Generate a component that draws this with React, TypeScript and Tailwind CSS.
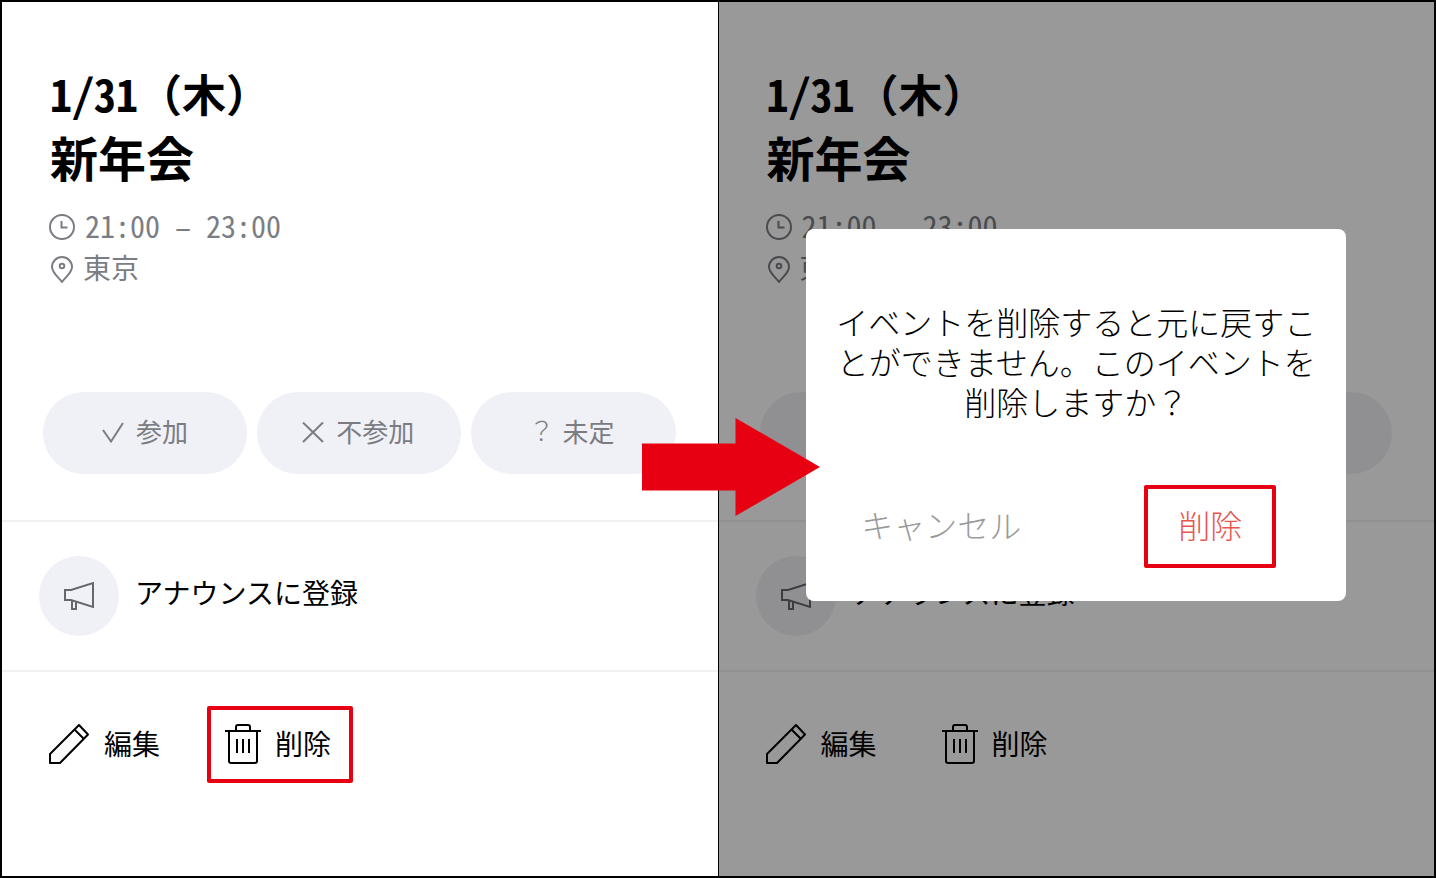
import { useState } from 'react';
import type { ReactNode } from 'react';

function ClockIcon() {
  return (
    <svg width="26" height="26" viewBox="0 0 26 26" fill="none" stroke="currentColor" strokeWidth="2" aria-hidden="true">
      <circle cx="13" cy="13" r="12" />
      <path d="M12.500 7v6.500h6" />
    </svg>
  );
}

function PinIcon() {
  return (
    <svg width="26" height="28" viewBox="0 0 26 28" fill="none" stroke="currentColor" strokeWidth="2" strokeLinejoin="round" aria-hidden="true">
      <path d="M13 27C10 22.500 3 18 3 12a10 10 0 0 1 20 0c0 6-7 10.500-10 15z" />
      <circle cx="13" cy="11" r="2.300" />
    </svg>
  );
}

function CheckIcon() {
  return (
    <svg width="22" height="22" viewBox="0 0 22 22" fill="none" stroke="currentColor" strokeWidth="2" aria-hidden="true">
      <path d="M1 8l8 11.500L21 1" />
    </svg>
  );
}

function CrossIcon() {
  return (
    <svg width="22" height="22" viewBox="0 0 22 22" fill="none" stroke="currentColor" strokeWidth="2" aria-hidden="true">
      <path d="M1 0.500l20 19.500M21 0.500l-20 19.500" />
    </svg>
  );
}

function MegaphoneIcon() {
  return (
    <svg width="30" height="30" viewBox="0 0 30 30" fill="none" stroke="currentColor" strokeWidth="2" aria-hidden="true">
      <path d="M1 9h6L29 2v24L7 19H1z" />
      <path d="M8 19.500V28h4v-7.500" />
    </svg>
  );
}

function PencilIcon() {
  return (
    <svg width="42" height="42" viewBox="0 0 42 42" fill="none" stroke="currentColor" strokeWidth="2" strokeLinejoin="round" aria-hidden="true">
      <path d="M2 40v-9L31 2l9 9.500L12 40z" />
      <path d="M26.500 6.500L36 16" />
    </svg>
  );
}

function TrashIcon() {
  return (
    <svg width="36" height="42" viewBox="0 0 36 42" fill="none" stroke="currentColor" strokeWidth="2" aria-hidden="true">
      <path d="M0 8h36M11 8V4q0-2 2-2h10q2 0 2 2v4" />
      <path d="M4 8v30q0 2 2 2h24q2 0 2-2V8" />
      <path d="M12 16v14M18 16v14M24 16v14" />
    </svg>
  );
}

const answers: { label: string; icon: ReactNode; style: string }[] = [
  { label: '参加', icon: <CheckIcon />, style: 'gap-3' },
  { label: '不参加', icon: <CrossIcon />, style: 'gap-3 pr-0.5' },
  { label: '未定', icon: <span className="pb-2 font-light">？</span>, style: 'gap-2 pr-1' },
];

function EventScreen({ highlight, onDelete }: { highlight?: boolean; onDelete?: () => void }) {
  return (
    <div className="flex flex-col">
      <section className="pt-[58px] pb-[46px] pr-[42px] pl-[41px]">
        <h1 className="pl-[7px] font-bold">
          <span className="block font-['Noto_Sans_Mono_CJK_JP','Noto_Sans_CJK_JP',sans-serif] text-[44px] leading-[66px]">
            1/31（木）
          </span>
          <span className="block text-[48px] leading-[60px]">新年会</span>
        </h1>
        <div className="mt-5 pl-1.5 text-[28px] leading-[38px] text-[#7b7d84]">
          <p className="flex items-center gap-2.5">
            <ClockIcon />
            <span className="pb-1 font-['Noto_Sans_Mono_CJK_JP','Noto_Sans_CJK_JP',sans-serif] text-[30px]">
              21:00 – 23:00
            </span>
          </p>
          <p className="flex items-center gap-2">
            <PinIcon />
            <span className="pb-1">東京</span>
          </p>
        </div>
        <div className="mt-[102px] grid grid-cols-3 gap-2.5">
          {answers.map((a) => (
            <button
              key={a.label}
              type="button"
              className={`flex h-[82px] items-center justify-center rounded-full bg-[#f0f1f6] text-[26px] text-[#7b7c82] ${a.style}`}
            >
              {a.icon}
              <span className="pb-1.5">{a.label}</span>
            </button>
          ))}
        </div>
      </section>

      <section className="border-t-2 border-[#f1f1f1] py-[34px] pl-[37px]">
        <button type="button" className="flex items-center gap-4 text-[28px]">
          <span className="flex size-20 items-center justify-center rounded-full bg-[#f0f1f6] text-[#66676d]">
            <MegaphoneIcon />
          </span>
          <span className="pb-2">アナウンスに登録</span>
        </button>
      </section>

      <section className="flex border-t-2 border-[#f1f1f1] pt-[34px] pb-16 pl-[46px] text-[28px]">
        <button type="button" className="flex h-[77px] items-center gap-3.5 pb-0.5">
          <PencilIcon />
          <span className="pb-0.5">編集</span>
        </button>
        <button
          type="button"
          onClick={onDelete}
          className={`ml-[47px] flex h-[77px] items-center gap-3.5 rounded-xs border-4 pr-[18px] pb-0.5 pl-3.5 ${
            highlight ? 'border-[#e60012]' : 'border-transparent'
          }`}
        >
          <TrashIcon />
          <span className="pb-0.5">削除</span>
        </button>
      </section>
    </div>
  );
}

function DeleteDialog({ onClose }: { onClose: () => void }) {
  return (
    <div className="absolute inset-0 flex items-start justify-center bg-black/40 pt-[227px]">
      <div
        role="dialog"
        aria-modal="true"
        className="w-[540px] rounded-lg bg-white px-[30px] pt-[72px] pb-[33px] text-[32px] leading-10 font-light"
      >
        <p className="text-center break-all">
          イベントを削除すると元に戻すことができません。このイベントを削除しますか？
        </p>
        <div className="mt-16 flex items-center justify-between pr-10 pl-[25px]">
          <button type="button" onClick={onClose} className="pb-1.5 text-[#9a9a9a]">
            キャンセル
          </button>
          <button
            type="button"
            onClick={onClose}
            className="h-[83px] rounded-xs border-4 border-[#e60012] px-[30px] pb-1.5 text-[#e8554e]"
          >
            削除
          </button>
        </div>
      </div>
    </div>
  );
}

export default function App() {
  const [open, setOpen] = useState(true);

  return (
    <main
      lang="ja"
      className="relative flex min-h-screen border-2 border-black bg-white font-['Noto_Sans_CJK_JP',sans-serif] text-black"
    >
      <div className="flex-1">
        <EventScreen highlight onDelete={() => setOpen(true)} />
      </div>
      <div className="relative flex-1 border-l border-black">
        <EventScreen />
        {open && <DeleteDialog onClose={() => setOpen(false)} />}
      </div>

      {/* arrow from the delete button to the dialog */}
      <svg
        className="absolute top-[416px] left-1/2 -ml-[76px] text-[#e60012]"
        width="178"
        height="98"
        viewBox="0 0 178 98"
        fill="currentColor"
        aria-hidden="true"
      >
        <path d="M0 25.500h93.500V0L178 49 93.500 98V72.500H0z" />
      </svg>
    </main>
  );
}
